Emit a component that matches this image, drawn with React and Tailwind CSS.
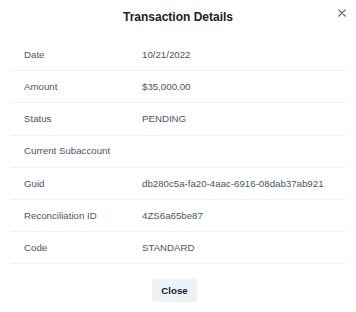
import React from "react";

const rows = [
  ["Date", "10/21/2022"],
  ["Amount", "$35,000.00"],
  ["Status", "PENDING"],
  ["Current Subaccount", ""],
  ["Guid", "db280c5a-fa20-4aac-6916-08dab37ab921"],
  ["Reconciliation ID", "4ZS6a65be87"],
  ["Code", "STANDARD"],
];

export default function App() {
  return (
    <div
      className="relative w-[356px] h-[312px] bg-white overflow-hidden"
      style={{ fontFamily: '"Liberation Sans", Arial, sans-serif' }}
    >
      <div className="flex h-[33px] items-center justify-center">
        <h2 className="text-[12px] font-bold text-[#1a202c] leading-none">
          Transaction Details
        </h2>
      </div>
      <button className="absolute left-[335px] top-[6px] flex h-[13px] w-[13px] items-center justify-center text-[#4a5568]">
        <svg width="8" height="8" viewBox="0 0 8 8" fill="none">
          <path d="M0.8 0.8 L7.2 7.2 M7.2 0.8 L0.8 7.2" stroke="currentColor" strokeWidth="1.2" strokeLinecap="round" />
        </svg>
      </button>
      <div className="mx-[10px] mt-[6px]">
        {rows.map(([k, v]) => (
          <div
            key={k}
            className="flex h-[32.2px] items-center border-b border-[#eef2f6] px-[14px] pt-[1px] text-[9.7px] text-[#4a5568]"
          >
            <div className="w-[118px] shrink-0">{k}</div>
            <div>{v}</div>
          </div>
        ))}
      </div>
      <div className="flex justify-center pr-[7px] pt-[15px]">
        <button className="h-[23px] w-[45px] rounded-[3px] bg-[#edf2f7] text-[9.7px] font-bold text-[#1a202c]">
          Close
        </button>
      </div>
    </div>
  );
}
